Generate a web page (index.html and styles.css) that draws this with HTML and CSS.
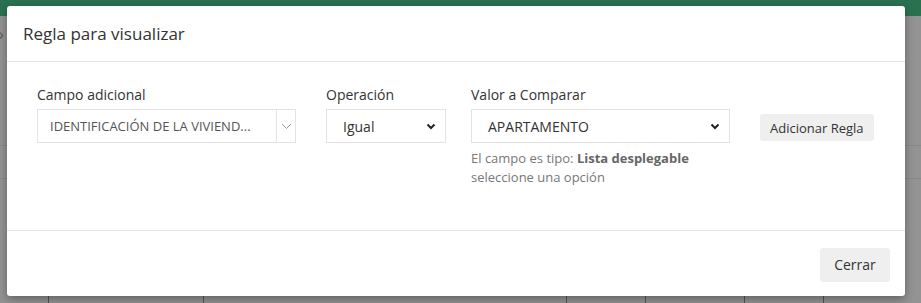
FILE: index.html
```html
<!DOCTYPE html>
<html lang="es">
<head>
  <meta charset="UTF-8">
  <meta name="viewport" content="width=device-width, initial-scale=1.0">
  <link rel="stylesheet" href="styles.css">
</head>
<body>
<div class="topbar"></div>
<div class="page">
  <span class="edge-arrow">&rsaquo;</span>
  <div class="page-row">
    <div class="page-box box-a"></div>
    <div class="page-box box-b"></div>
    <div class="page-box box-c"></div>
  </div>
</div>

<div class="modal">
  <div class="modal-header">
    <h4 class="modal-title">Regla para visualizar</h4>
  </div>

  <div class="modal-body">
    <div class="field field-campo">
      <label class="field-label">Campo adicional</label>
      <div class="combo">
        <span class="combo-text">IDENTIFICACIÓN DE LA VIVIEND...</span>
        <span class="combo-arrow">
          <svg width="11" height="7" viewBox="0 0 11 7"><path d="M1 1l4.5 4.5L10 1" fill="none" stroke="#999" stroke-width="1"/></svg>
        </span>
      </div>
    </div>

    <div class="field field-op">
      <label class="field-label">Operación</label>
      <div class="select">
        <span>Igual</span>
        <svg width="10" height="7" viewBox="0 0 10 7"><path d="M1.5 1.5L5 5l3.5-3.5" fill="none" stroke="#222" stroke-width="2"/></svg>
      </div>
    </div>

    <div class="field field-valor">
      <label class="field-label">Valor a Comparar</label>
      <div class="select">
        <span>APARTAMENTO</span>
        <svg width="10" height="7" viewBox="0 0 10 7"><path d="M1.5 1.5L5 5l3.5-3.5" fill="none" stroke="#222" stroke-width="2"/></svg>
      </div>
      <p class="help">El campo es tipo: <b>Lista desplegable</b><br>seleccione una opción</p>
    </div>

    <div class="field field-btn">
      <button class="btn">Adicionar Regla</button>
    </div>
  </div>

  <div class="modal-footer">
    <button class="btn btn-lg">Cerrar</button>
  </div>
</div>
</body>
</html>
```

FILE: styles.css
```css
html, body {
  margin: 0;
  height: 100%;
}

body {
  background-color: #919191;
  font-family: "Open Sans", "Noto Sans", sans-serif;
  color: #333;
  position: relative;
  overflow: hidden;
}

.topbar {
  height: 16px;
  background-color: #2a7150;
}

/* pagina detras del fondo oscuro */
.page {
  height: 287px;
  display: flex;
  flex-direction: column;
  justify-content: flex-end;
  background:
    linear-gradient(#888, #888) 0 129px / 100% 1px no-repeat,
    linear-gradient(#888, #888) 0 162px / 100% 1px no-repeat,
    #939393;
}

.edge-arrow {
  position: absolute;
  left: -1px;
  top: 23px;
  color: #555;
  font-size: 16px;
}

.page-row {
  height: 8px;
  display: flex;
}

.page-box {
  flex-shrink: 0;
  height: 8px;
  border: 1px solid #555;
  border-bottom: none;
  box-sizing: border-box;
}

.box-a { width: 156px; margin-left: 48px; }
.box-b { width: 80px; margin-left: 362px; }
.box-c { width: 80px; margin-left: 98px; }

/* ventana modal */
.modal {
  position: absolute;
  top: 6px;
  left: 7px;
  width: 898px;
  height: 290px;
  background: #fff;
  border-radius: 3px;
  box-shadow: 0 3px 8px rgba(0, 0, 0, 0.35);
  display: flex;
  flex-direction: column;
}

.modal-header {
  height: 55px;
  padding: 0 16px;
  border-bottom: 1px solid #e5e5e5;
  display: flex;
  align-items: center;
}

.modal-title {
  margin: 0;
  font-size: 17px;
  font-weight: 400;
  color: #333;
}

.modal-body {
  height: 168px;
  border-bottom: 1px solid #e5e5e5;
  padding: 0 30px;
  display: flex;
  align-items: flex-start;
}

.field {
  flex-shrink: 0;
  display: flex;
  flex-direction: column;
  padding-top: 23px;
}

.field-label {
  font-size: 14px;
  line-height: 20px;
  margin-bottom: 4px;
  color: #333;
}

.field-campo { width: 259px; margin-right: 30px; }
.field-op { width: 120px; margin-right: 25px; }
.field-valor { width: 259px; margin-right: 30px; }
.field-btn { padding-top: 52px; }

.combo {
  height: 32px;
  border: 1px solid #e3e3e3;
  display: flex;
  align-items: center;
}

.combo-text {
  flex: 1;
  padding-left: 12px;
  font-size: 13px;
  color: #555;
  white-space: nowrap;
  overflow: hidden;
}

.combo-arrow {
  width: 18px;
  height: 32px;
  border-left: 1px solid #e3e3e3;
  display: flex;
  align-items: center;
  justify-content: center;
}

.select {
  height: 32px;
  border: 1px solid #e3e3e3;
  display: flex;
  align-items: center;
  justify-content: space-between;
  padding: 0 9px 0 16px;
  font-size: 14px;
  color: #333;
}

.help {
  margin: 6px 0 0;
  font-size: 13px;
  line-height: 19px;
  color: #777;
  white-space: nowrap;
}

.help b {
  color: #666;
}

.btn {
  font-family: inherit;
  font-size: 13px;
  color: #333;
  background: #efefef;
  border: none;
  border-radius: 3px;
  height: 27px;
  padding: 0 10px;
  white-space: nowrap;
}

.modal-footer {
  flex: 1;
  display: flex;
  justify-content: flex-end;
  align-items: center;
  padding: 0 15px;
}

.btn-lg {
  font-size: 14px;
  height: 34px;
  width: 70px;
  padding: 0;
  margin-top: 2px;
}
```
